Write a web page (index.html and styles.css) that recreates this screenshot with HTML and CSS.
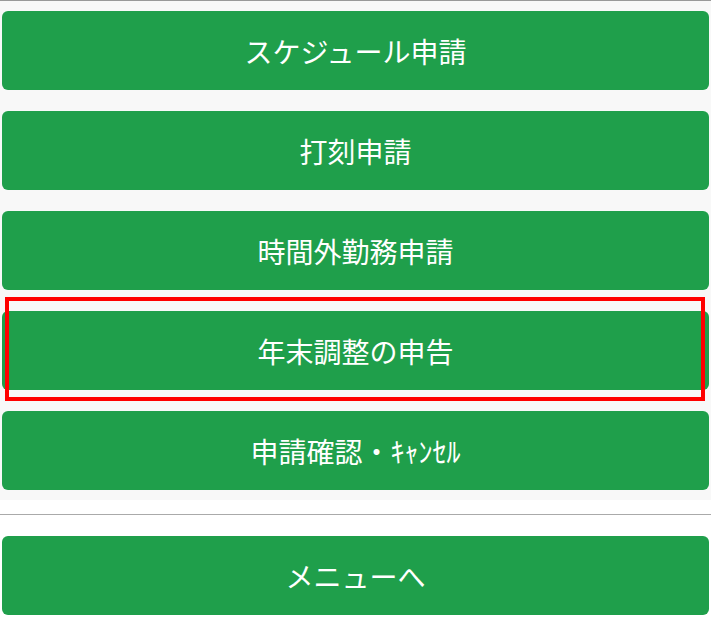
FILE: index.html
```html
<!DOCTYPE html>
<html lang="ja">
<head>
    <meta charset="UTF-8">
    <meta name="viewport" content="width=device-width, initial-scale=1.0">
    <title>申請メニュー</title>
    <link rel="stylesheet" href="styles.css">
</head>
<body>
    <div class="menu">
        <a class="btn" href="#">スケジュール申請</a>
        <a class="btn" href="#">打刻申請</a>
        <a class="btn" href="#">時間外勤務申請</a>
        <div class="marked">
            <a class="btn" href="#">年末調整の申告</a>
            <span class="mark"></span>
        </div>
        <a class="btn" href="#">申請確認・ｷｬﾝｾﾙ</a>
    </div>
    <hr class="divider">
    <div class="bottom">
        <a class="btn" href="#">メニューへ</a>
    </div>
</body>
</html>
```
FILE: styles.css
```css
* {
    margin: 0;
    padding: 0;
    box-sizing: border-box;
}

body {
    font-family: "Noto Sans CJK JP", "Noto Sans", sans-serif;
    background-color: #fff;
    border-top: 1px solid #999;
}

.menu {
    background-color: #f8f8f8;
    padding: 10px 2px 10px;
    display: flex;
    flex-direction: column;
    gap: 21px;
}

.btn {
    display: flex;
    align-items: center;
    justify-content: center;
    height: 79px;
    background-color: #1f9f4b;
    color: #fff;
    font-size: 28px;
    text-decoration: none;
    border-radius: 6px;
}

.marked {
    position: relative;
}

.mark {
    position: absolute;
    top: -14px;
    bottom: -11px;
    left: 3px;
    right: 4px;
    border: 4px solid #ff0000;
}

.divider {
    border: none;
    border-top: 1px solid #aaa;
    margin: 14px 0 0;
}

.bottom {
    padding: 21px 2px 0;
}
```
